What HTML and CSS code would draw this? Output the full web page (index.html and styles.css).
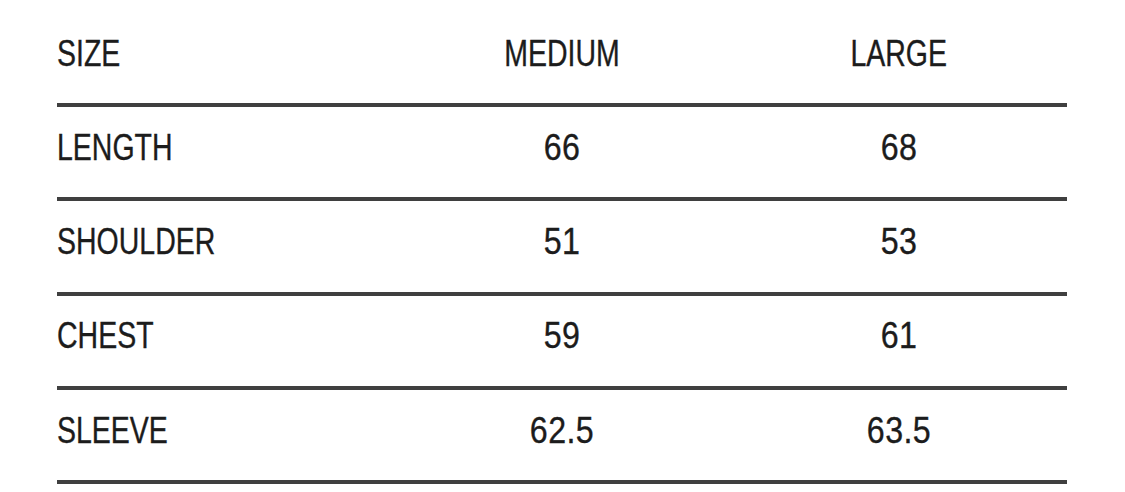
FILE: index.html
```html
<!DOCTYPE html>
<html>
<head>
<meta charset="utf-8">
<link rel="stylesheet" href="styles.css">
</head>
<body>
<div class="chart">
  <div class="row head">
    <div class="cell label"><span class="txt">SIZE</span></div>
    <div class="cell"><span class="txt">MEDIUM</span></div>
    <div class="cell"><span class="txt">LARGE</span></div>
  </div>
  <div class="row">
    <div class="cell label"><span class="txt">LENGTH</span></div>
    <div class="cell"><span class="txt num">66</span></div>
    <div class="cell"><span class="txt num">68</span></div>
  </div>
  <div class="row">
    <div class="cell label"><span class="txt">SHOULDER</span></div>
    <div class="cell"><span class="txt num">51</span></div>
    <div class="cell"><span class="txt num">53</span></div>
  </div>
  <div class="row">
    <div class="cell label"><span class="txt">CHEST</span></div>
    <div class="cell"><span class="txt num">59</span></div>
    <div class="cell"><span class="txt num">61</span></div>
  </div>
  <div class="row">
    <div class="cell label"><span class="txt">SLEEVE</span></div>
    <div class="cell"><span class="txt num">62.5</span></div>
    <div class="cell"><span class="txt num">63.5</span></div>
  </div>
</div>
</body>
</html>
```
FILE: styles.css
```css
html, body {
  margin: 0;
  padding: 0;
  background: #ffffff;
}
body {
  font-family: "Liberation Sans", Arial, sans-serif;
  color: #1c1c1c;
}
.chart {
  width: 1010px;
  margin-left: 57px;
}
.row {
  display: grid;
  grid-template-columns: 1fr 1fr 1fr;
  align-items: center;
  height: 80.3px;
  padding-bottom: 10px;
  border-bottom: 4px solid #3f3f3f;
}
.head {
  height: 86px;
  padding-top: 10px;
  padding-bottom: 7px;
}
.cell {
  font-size: 37px;
  line-height: 1;
  text-align: center;
}
.txt {
  display: inline-block;
  transform: scaleX(0.77);
  transform-origin: center;
  -webkit-text-stroke: 0.35px #1c1c1c;
}
.txt.num {
  transform: scaleX(0.87);
  letter-spacing: 0.5px;
}
.cell.label {
  text-align: left;
}
.cell.label .txt {
  transform-origin: left center;
}
```
